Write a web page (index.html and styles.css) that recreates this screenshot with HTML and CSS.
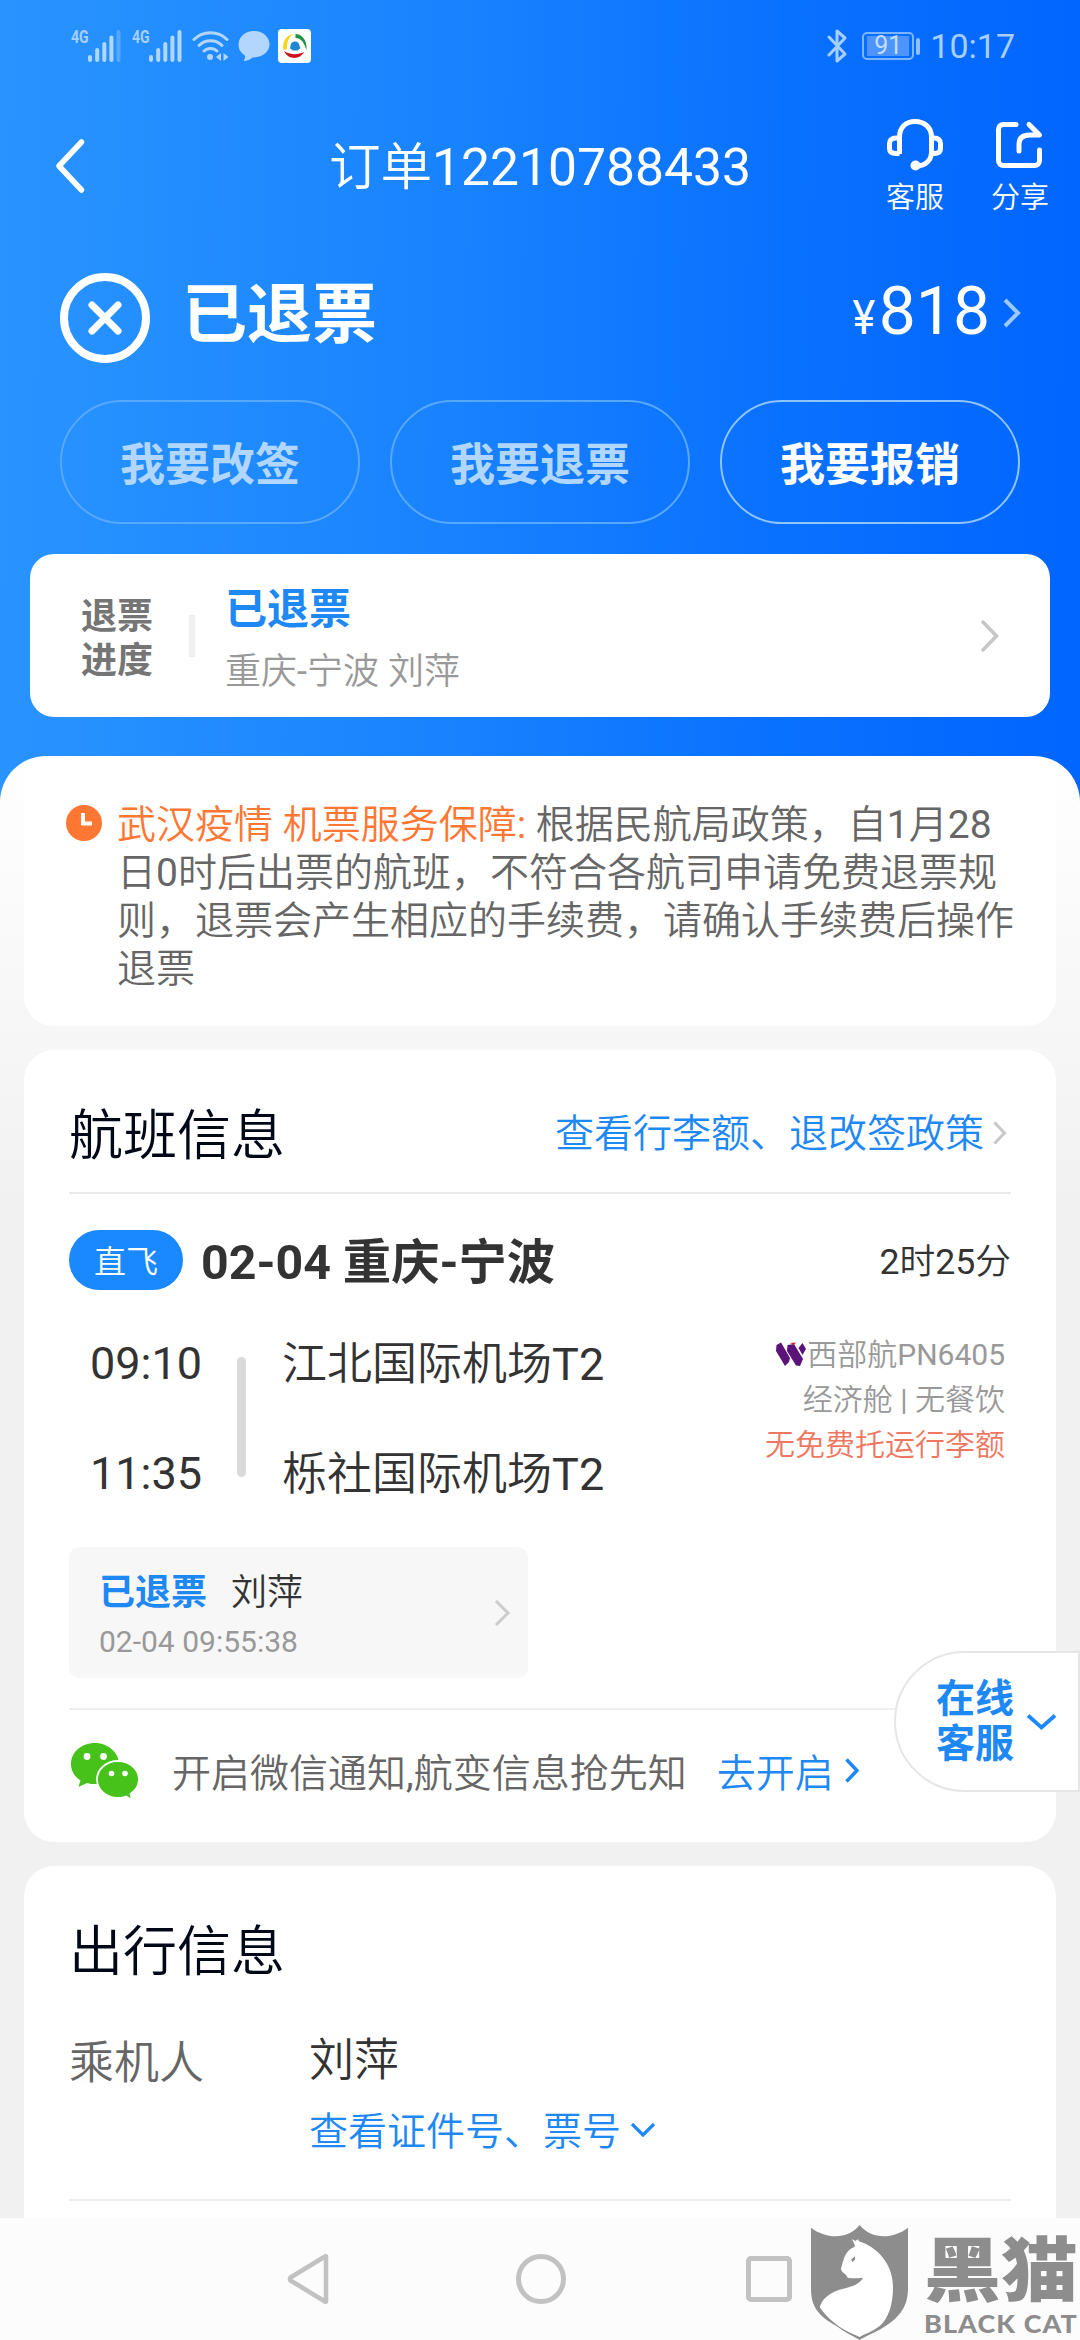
FILE: index.html
```html
<!DOCTYPE html>
<html lang="zh-CN">
<head>
<meta charset="utf-8">
<title>订单12210788433</title>
<link rel="stylesheet" href="styles.css">
</head>
<body>
<div class="screen">
  <div class="statusbar">
    <div class="status-left">
      <div class="net"><span>4G</span>
        <svg width="33" height="32" viewBox="0 0 33 32"><g class="bar"><path d="M2 27v3M9.200 20v10M16.300 14v16M23.400 7.500v22.500"/><path d="M30.500 2v28" opacity=".35"/></g></svg>
      </div>
      <div class="net net2"><span>4G</span>
        <svg width="33" height="32" viewBox="0 0 33 32"><g class="bar"><path d="M2 27v3M9.200 20v10M16.300 14v16M23.400 7.500v22.500M30.500 2v28"/></g></svg>
      </div>
      <svg class="wifi" width="37" height="32" viewBox="0 0 37 32"><g fill="none" stroke="#b3d6ff" stroke-width="3" stroke-linecap="round"><path d="M2 9.500C11 .5 26 .5 35 9.500"/><path d="M7 15.500C13 9 24 9 30 15.500"/><path d="M12 21C15.500 17.500 21.500 17.500 25 21"/></g><circle cx="18" cy="27" r="3" fill="#b3d6ff"/><path d="M29 23v8l-5-4zM31.500 23v8l5-4z" fill="#b3d6ff"/></svg>
      <svg class="chat" width="32" height="32" viewBox="0 0 32 32"><path d="M16 1C7 1 .5 7 .5 14.500c0 5 2.500 8.500 6 10.500 1 1.500.5 4-1 6 4 0 6.500-1.500 9-3.500C24 27.500 31.500 22 31.500 14.500 31.500 7 25 1 16 1z" fill="#b3d6ff"/></svg>
      <svg width="33" height="34" viewBox="0 0 33 34"><rect width="33" height="34" rx="4" fill="#fff"/><path d="M15 5C9 6 4 12 5.500 21l3.500-1C9 13 10 9 15 5z" fill="#f6d314"/><path d="M17.500 5c6 0 12 6 11 16C26 14 24 9.500 17.500 9z" fill="#209447"/><path d="M6 22c6 4 14 4 20 1-4 8-16 8-20-1z" fill="#cf101d"/><path d="M12.500 17a4.500 4.500 0 0 1 9 0l1 2-3 2.500h-4.500l-3-2z" fill="#1f86cf"/></svg>
    </div>
    <div class="status-right">
      <svg width="21" height="34" viewBox="0 0 21 34"><path d="M2 8l16 17-8 7V2l8 7L2 26" fill="none" stroke="#a6ceff" stroke-width="3" stroke-linejoin="round" stroke-linecap="round"/></svg>
      <div class="battery"><span>91</span></div><i class="battery-tip"></i>
      <span class="clock">10:17</span>
    </div>
  </div>

  <div class="titlebar">
    <svg class="back" width="30" height="54" viewBox="0 0 30 54"><path d="M26.500 3L4 27l22.500 24" fill="none" stroke="#fff" stroke-width="5.500" stroke-linecap="round" stroke-linejoin="round"/></svg>
    <h1>订单12210788433</h1>
    <div class="tools">
      <div class="tool">
        <svg width="56" height="52" viewBox="0 0 56 52"><g fill="none" stroke="#fff" stroke-width="5" stroke-linejoin="round"><path d="M12.500 35V18C12.500 8 19 2.500 28 2.500S44.500 8 44.500 18v15c0 8-6 14-15 14"/><path d="M12.500 19H9c-4.500 0-6.500 2.500-6.500 5.500v5c0 3 2 5 6.500 5h3.500M44.500 19H47c4.500 0 6.500 2.500 6.500 5.500v5c0 3-2 5-6.500 5h-2.500"/></g><circle cx="28.500" cy="46.500" r="5" fill="#fff"/></svg>
        <span>客服</span>
      </div>
      <div class="tool">
        <svg width="48" height="52" viewBox="0 -3 48 52"><g fill="none" stroke="#fff" stroke-width="5" stroke-linejoin="round" stroke-linecap="round"><path d="M20 2.500H7.500c-3 0-5 2-5 5v31c0 3 2 5 5 5h31c3 0 5-2 5-5V28"/><path d="M33 2.500l10.500 10.500H34c-7 0-11 3-11 9v7"/></g></svg>
        <span>分享</span>
      </div>
    </div>
  </div>

  <div class="state">
    <svg width="90" height="90" viewBox="0 0 90 90"><g fill="none" stroke="#fff"><circle cx="45" cy="45" r="41" stroke-width="8"/><path d="M32 32l26 26M58 32L32 58" stroke-width="7" stroke-linecap="round"/></g></svg>
    <strong>已退票</strong>
    <div class="price"><small>¥</small><span>818</span>
      <svg width="18" height="30" viewBox="0 0 18 30"><path d="M2 2l13 13L2 28" fill="none" stroke="#9cc9ff" stroke-width="4"/></svg>
    </div>
  </div>

  <div class="actions">
    <div class="action off">我要改签</div>
    <div class="action off">我要退票</div>
    <div class="action">我要报销</div>
  </div>

  <div class="progress">
    <div class="progress-label">退票<br>进度</div>
    <i class="bar-sep"></i>
    <div class="progress-main"><b>已退票</b><span>重庆-宁波 刘萍</span></div>
    <svg width="18" height="32" viewBox="0 0 18 32"><path d="M2 2l13.500 14L2 30" fill="none" stroke="#c6c6c6" stroke-width="3.500" stroke-linecap="round"/></svg>
  </div>

  <div class="sheet">
    <div class="card notice">
      <svg width="36" height="36" viewBox="0 0 36 36"><circle cx="18" cy="18" r="18" fill="#ff7733"/><path d="M17 8v10.500h9" fill="none" stroke="#fff" stroke-width="4"/></svg>
      <p><em>武汉疫情 机票服务保障:</em> 根据民航局政策，自1月28<br>日0时后出票的航班，不符合各航司申请免费退票规<br>则，退票会产生相应的手续费，请确认手续费后操作<br>退票</p>
    </div>

    <div class="card flight">
      <div class="card-head">
        <h2>航班信息</h2>
        <div class="link">查看行李额、退改签政策<svg width="14" height="24" viewBox="0 0 14 24"><path d="M1.500 1.500L11.500 12l-10 10.500" fill="none" stroke="#c8c8c8" stroke-width="3"/></svg></div>
      </div>
      <div class="route">
        <span class="pill">直飞</span>
        <b>02-04 重庆-宁波</b>
        <span class="duration">2时25分</span>
      </div>
      <div class="legs">
        <div class="times"><span>09:10</span><span>11:35</span></div>
        <i class="leg-line"></i>
        <div class="airports"><span>江北国际机场T2</span><span>栎社国际机场T2</span></div>
        <div class="meta">
          <div><svg width="31" height="25" viewBox="0 0 31 25"><g fill="#5b1279"><path d="M.5 3L5 .5 14 16l-1 4-4 4L0 9zM11.500 3L18 2l9 15-3 7-4-.5L11 9zM26.500 1L30 7l-3.500 6-4-7z"/></g><path d="M14 1l6-.5-2 2.500z" fill="#d5202c"/></svg>西部航PN6405</div>
          <div>经济舱 | 无餐饮</div>
          <div class="warn">无免费托运行李额</div>
        </div>
      </div>
      <div class="ticket">
        <div class="ticket-main">
          <div><b>已退票</b><span>刘萍</span></div>
          <time>02-04 09:55:38</time>
        </div>
        <svg width="17" height="28" viewBox="0 0 17 28"><path d="M2 2l12 12L2 26" fill="none" stroke="#ccc" stroke-width="3"/></svg>
      </div>
      <div class="wechat">
        <svg width="69" height="58" viewBox="0 0 69 58"><g fill="#46c21a"><path d="M24 1C10.500 1 0 10 0 22c0 7 3.500 12.500 9.500 16.500L7.500 45l8.500-4c3 1 5 1 8 1 13.500 0 24-9 24-20S37.500 1 24 1z"/><path d="M47 19c-12 0-21 8.500-21 18.500S35 56 47 56c3 0 6-.5 8-1.500l6 3.500-1.500-6c5-3.500 8.500-8.500 8.500-14.500C68 27.500 59 19 47 19z" stroke="#fff" stroke-width="1.800"/></g><g fill="#fff"><circle cx="16" cy="14.500" r="3.400"/><circle cx="32.500" cy="14.500" r="3.400"/><circle cx="40.500" cy="31.500" r="2.800"/><circle cx="54" cy="31.500" r="2.800"/></g></svg>
        <span class="wechat-text">开启微信通知,航变信息抢先知</span>
        <span class="open">去开启</span>
        <svg width="16" height="27" viewBox="0 0 16 27"><path d="M2.500 2.500l10.500 11L2.500 24.500" fill="none" stroke="#1e88f5" stroke-width="3.500"/></svg>
      </div>
    </div>

    <div class="card trip">
      <h2>出行信息</h2>
      <div class="passenger">
        <span class="label">乘机人</span>
        <div class="who">
          <span>刘萍</span>
          <div class="link">查看证件号、票号<svg width="26" height="16" viewBox="0 0 26 16"><path d="M2 2l11 11L24 2" fill="none" stroke="#1e88f5" stroke-width="3.200"/></svg></div>
        </div>
      </div>
    </div>
  </div>

  <div class="navbar">
    <svg width="44" height="52" viewBox="0 0 44 52"><path d="M39 3.500V48.500Q38.500 49 38 48.500L3.500 27.500Q2.500 26 3.500 24.500L38 3.500Q39 3 39 3.500z" fill="none" stroke="#c2c2c2" stroke-width="4.600" stroke-linejoin="round"/></svg>
    <i class="nav-home"></i>
    <i class="nav-recent"></i>
  </div>

  <div class="float">
    <span>在线<br>客服</span>
    <svg width="31" height="18" viewBox="0 0 31 18"><path d="M2 2.500l13.500 12L29 2.500" fill="none" stroke="#1e88f5" stroke-width="3.800"/></svg>
  </div>

  <div class="watermark">
    <svg width="97" height="115" viewBox="0 0 291 345"><path d="M0 8C45 42 110 45 146 0c36 45 101 42 145 8v182c0 60-30 92-80 121-30 16-55 26-65 34-12-8-40-20-70-42C20 272 0 244 0 190z" fill="#8e8d8e"/><path d="M123 42l10 6 8-5 3 6c52 16 102 66 102 136 0 55-14 95-40 118-22 18-46 24-60 33-25-12-56-24-80-46-15-12-30-28-40-44 8-24 24-36 44-46 30-14 70-12 86-42-18 2-34 2-46 0-6-14-20-14-20-28 6-18 10-42 24-54 8-8 16-8 18-14z" fill="#fff"/><path d="M118 106l14-12v10l-8 8-2-7z" fill="#8e8d8e"/></svg>
    <div class="wm-text"><span class="wm-cn">黑猫</span><span class="wm-en">BLACK CAT</span></div>
  </div>
</div>
</body>
</html>
```

FILE: styles.css
```css
* { box-sizing: border-box; margin: 0; padding: 0; }
body { font-family: Roboto, "Noto Sans CJK SC DemiLight", "Noto Sans CJK SC", sans-serif; }
b, strong, .action, .progress-label, .float { font-family: Roboto, "Noto Sans CJK SC", sans-serif; }
svg { display: block; flex: none; }
h1, h2 { font-weight: 400; }
em, i { font-style: normal; }

.screen {
  position: relative;
  display: flex;
  flex-direction: column;
  width: 1080px;
  height: 2340px;
  overflow: hidden;
  background: linear-gradient(91deg, #2994ff 0, #1a84ff 38%, #0a72ff 68%, #0064ff 100%);
  color: #333;
  white-space: nowrap;
}

/* status bar */
.statusbar {
  flex: none;
  display: flex;
  justify-content: space-between;
  align-items: center;
  height: 92px;
  padding: 0 65px 0 71px;
  color: #a6ceff;
}
.status-left, .status-right { display: flex; align-items: center; }
.net { display: flex; align-items: flex-start; width: 50px; }
.net2 { margin-left: 11px; }
.net span {
  width: 17px;
  font: 700 19px/14px Roboto, sans-serif;
  transform: scaleX(.74);
  transform-origin: left;
  white-space: nowrap;
}
.bar path { fill: none; stroke: #b3d6ff; stroke-width: 4; stroke-linecap: round; }
.wifi { margin-left: 10px; }
.chat { margin: 0 8px 0 9px; }
.battery {
  width: 52px;
  height: 28px;
  margin-left: 14px;
  padding: 2px;
  border: 2px solid #7db5ff;
  border-radius: 5px;
}
.battery span {
  display: block;
  width: 42px;
  height: 20px;
  margin-left: 1px;
  background: #4d94ff;
  color: #c2ddff;
  font-size: 25px;
  line-height: 20px;
  text-align: center;
}
.battery-tip { width: 4px; height: 17px; margin-left: 2px; border-radius: 2px; background: #8fc0ff; }
.clock { margin-left: 10px; font-size: 34px; line-height: 40px; }

/* title bar */
.titlebar {
  flex: none;
  display: grid;
  grid-template-columns: 1fr auto 1fr;
  align-items: center;
  height: 148px;
  padding: 0 31px;
  color: #fff;
}
.back { margin-left: 24px; }
h1 { padding-top: 3px; font-size: 51.6px; line-height: 60px; }
.tools { display: flex; justify-content: flex-end; gap: 47px; padding-top: 6px; }
.tool { display: flex; flex-direction: column; align-items: center; gap: 6px; }
.tool span { font-size: 29px; line-height: 42px; }

/* order state */
.state {
  flex: none;
  display: flex;
  align-items: center;
  height: 160px;
  padding: 0 59px 4px 60px;
  color: #fff;
}
.state strong { margin: 0 0 6px 32px; font-size: 65px; line-height: 84px; }
.price { display: flex; align-items: baseline; margin: 0 0 6px auto; line-height: 80px; }
.price small { font-size: 48px; transform: scaleX(.9); transform-origin: right; }
.price span { margin-left: 4px; font-size: 66px; }
.price svg { align-self: center; margin: 0 0 4px 13px; }

.actions { flex: none; display: flex; gap: 30px; padding: 0 60px; }
.action {
  flex: 1;
  height: 124px;
  border: 2px solid #8fc4ff;
  border-radius: 62px;
  color: #fff;
  font-size: 45px;
  font-weight: 700;
  line-height: 127px;
  text-align: center;
}
.action.off { color: #b1d6ff; border-color: #58a8ff; }

.progress {
  flex: none;
  display: flex;
  align-items: center;
  height: 163px;
  margin: 30px 30px 0;
  padding: 0 51px;
  border-radius: 24px;
  background: #fff;
}
.progress-label { padding-top: 7px; color: #757575; font-size: 36px; font-weight: 700; line-height: 44px; }
.bar-sep { width: 6px; height: 42px; margin: 0 30px 0 36px; background: #eee; }
.progress-main { display: flex; flex: 1; flex-direction: column; padding-top: 10px; }
.progress-main b { color: #1e88f5; font-size: 42px; line-height: 64px; }
.progress-main span { color: #999; font-size: 36px; line-height: 61px; }

/* content sheet */
.sheet {
  flex: 1;
  min-height: 0;
  display: flex;
  flex-direction: column;
  gap: 24px;
  overflow: hidden;
  margin-top: 39px;
  padding: 0 24px;
  border-radius: 46px 46px 0 0;
  background: linear-gradient(180deg, #fff 0, #f1f1f1 450px);
}
.card { flex: none; border-radius: 30px; background: #fff; }
.notice { display: flex; gap: 15px; height: 270px; padding: 45px 0 0 42px; }
.notice svg { margin-top: 4px; }
.notice p { color: #666; font-size: 39px; line-height: 48px; }
.notice em { color: #ff7733; }

.flight { height: 792px; padding: 0 45px; }
.card-head {
  display: flex;
  justify-content: space-between;
  align-items: center;
  height: 144px;
  padding: 26px 4px 0 0;
  border-bottom: 2px solid #eaeaea;
}
h2 { color: #000818; font-size: 54px; line-height: 70px; }
.card-head h2 { padding-top: 5px; }
.link { display: flex; align-items: center; color: #1e88f5; font-size: 39px; line-height: 50px; }
.card-head .link svg { margin: 0 0 2px 9px; }
.route { display: flex; align-items: center; height: 132px; }
.pill {
  width: 114px;
  height: 60px;
  border-radius: 30px;
  background: #1a89ff;
  color: #fff;
  font-size: 32px;
  line-height: 64px;
  text-align: center;
}
.route b { margin-left: 18px; padding-top: 5px; font-size: 48.3px; line-height: 60px; }
.duration { margin-left: auto; padding-top: 4px; font-size: 35.7px; line-height: 44px; }
.legs { display: flex; height: 221px; padding: 0 6px 0 21px; }
.times, .airports { display: flex; flex-direction: column; font-size: 45px; line-height: 75px; gap: 35px; }
.airports { padding-top: 1px; }
.leg-line { width: 9px; height: 120px; margin: 31px 36px 0 35px; border-radius: 5px; background: #dadada; }
.meta { margin: 6px 0 0 auto; color: #999; font-size: 30px; line-height: 45px; text-align: right; }
.meta div:first-child { display: flex; align-items: center; justify-content: flex-end; }
.meta .warn { color: #f0775f; }
.ticket {
  display: flex;
  align-items: center;
  justify-content: space-between;
  width: 459px;
  height: 131px;
  padding: 0 17px 0 30px;
  border-radius: 10px;
  background: #f7f7f7;
}
.ticket-main { display: flex; flex-direction: column; padding-top: 7px; }
.ticket-main div { display: flex; gap: 24px; font-size: 36px; line-height: 52px; }
.ticket b { color: #1e88f5; }
.ticket time { color: #999; font-size: 30px; line-height: 46px; }
.wechat {
  display: flex;
  align-items: center;
  height: 134px;
  margin-top: 30px;
  padding: 0 2px 11px;
  border-top: 2px solid #eee;
}
.wechat-text { margin-left: 32px; padding-top: 7px; color: #666; font-size: 39px; line-height: 50px; }
.open { margin: 7px 10px 0 30px; color: #1e88f5; font-size: 39px; line-height: 50px; }

.trip { height: 500px; padding: 52px 45px 0; }
.passenger { display: flex; height: 213px; border-bottom: 2px solid #eee; font-size: 45px; }
.label { width: 240px; color: #666; line-height: 152px; }
.who { display: flex; flex-direction: column; }
.who > span { line-height: 145px; }
.who .link { margin-top: -26px; }
.who .link svg { margin: 0 0 4px 9px; }

/* system navigation */
.navbar {
  flex: none;
  display: flex;
  align-items: center;
  height: 122px;
  padding: 0 0 0 287px;
  background: #fcfcfc;
}
.nav-home { width: 50px; height: 50px; margin-left: 185px; border: 5px solid #c2c2c2; border-radius: 50%; }
.nav-recent { width: 46px; height: 46px; margin-left: 180px; border: 5px solid #c2c2c2; border-radius: 5px; }

/* floating support tab */
.float {
  position: absolute;
  top: 1651px;
  right: 0;
  display: flex;
  align-items: center;
  gap: 12px;
  width: 186px;
  height: 141px;
  padding-left: 40px;
  border: 2px solid #e6e6e6;
  border-radius: 71px 0 0 71px;
  background: #fff;
  color: #1e88f5;
  font-size: 39px;
  font-weight: 700;
  line-height: 45px;
}

.watermark { position: absolute; left: 811px; top: 2225px; display: flex; gap: 16px; color: #8e8d8e; }
.wm-text { display: flex; flex-direction: column; align-items: flex-start; padding-top: 4px; }
.wm-cn { font: 900 77px/74px "Noto Sans CJK SC", sans-serif; transform: scaleY(.92); }
.wm-en { margin-top: 9px; font: 900 24px/24px Lato, sans-serif; letter-spacing: 1px; transform: scaleX(1.12); transform-origin: left; }
```
